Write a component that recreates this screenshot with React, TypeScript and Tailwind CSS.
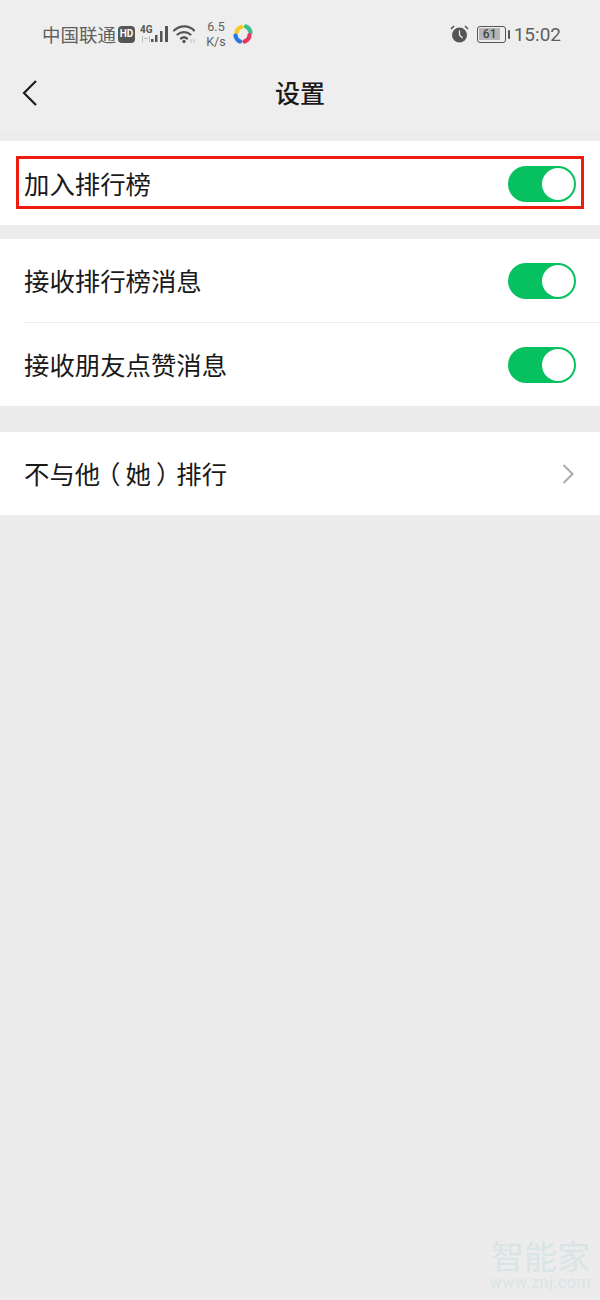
const font = { fontFamily: '"Noto Sans CJK SC", sans-serif' };

function Toggle() {
  return (
    <span className="flex h-[36px] w-[68px] shrink-0 items-center justify-end rounded-full bg-[#07c160] pr-[2px]">
      <span className="h-[32px] w-[32px] rounded-full bg-white" />
    </span>
  );
}

function StatusBar() {
  return (
    <div className="flex h-[68px] items-center justify-between pl-[42px] pr-[39px] text-[#5f5f5f]">
      <div className="flex items-center">
        <span className="text-[18.500px] leading-[24px]">中国联通</span>
        <span className="ml-[2px] flex h-[17px] w-[17px] items-center justify-center rounded-[4px] bg-[#555] font-['Roboto',sans-serif] text-[10px] font-bold leading-none text-white">HD</span>
        <svg className="ml-[5px]" width="29" height="20" viewBox="0 0 29 20" fill="#555">
          <text x="0" y="9" fontSize="10" fontWeight="700" fontFamily="Roboto, sans-serif">4G</text>
          <path d="M2 12h1v6H2zM4 14h4v1H4zM9 12h1v6H9z" fill="#bbb" />
          <rect x="11" y="15" width="2.500" height="3" />
          <rect x="15" y="11" width="2.500" height="7" />
          <rect x="20" y="7" width="2.500" height="11" />
          <rect x="25" y="2" width="3" height="16" />
        </svg>
        <svg className="ml-[4px]" width="24" height="20" viewBox="0 0 24 20" fill="none" stroke="#555" strokeWidth="2.300" strokeLinecap="round">
          <path d="M1 6.500c6-5.500 15-5.500 20 0" />
          <path d="M4.500 10.500c3.700-3.300 9.300-3.300 13 0" />
          <path d="M8 14.500c1.700-1.400 4.300-1.400 6 0" />
          <circle cx="11" cy="17.500" r="1.700" fill="#555" stroke="none" />
          <path d="M18 15.500v3M21 15.500v3" stroke="#bbb" strokeWidth="1" />
        </svg>
        <span className="ml-[8px] flex w-[22px] flex-col items-center font-['Roboto',sans-serif] text-[12.500px] leading-[15px]">
          <span>6.5</span>
          <span>K/s</span>
        </span>
        <svg className="ml-[6px]" width="20" height="20" viewBox="0 0 20 20" fill="none" strokeWidth="4.200" strokeLinecap="round">
          <path d="M3.500 9c0-2.500 1.500-5 5-6" stroke="#f6c829" />
          <path d="M13 2.500c2 .8 4 2.500 4.500 6" stroke="#3dbd8e" />
          <path d="M16.500 11c0 2.500-1.500 5-5 6.500" stroke="#e8365d" />
          <path d="M7 17.500c-2-.8-4-2.500-4.500-6" stroke="#2a77e0" />
        </svg>
      </div>
      <div className="flex items-center">
        <svg width="19" height="18" viewBox="0 0 19 18" fill="#555">
          <circle cx="9.500" cy="10" r="7.500" />
          <path d="M9.500 5.500V10l3 3" fill="none" stroke="#ededed" strokeWidth="1.300" />
          <path d="M1 4l3-3M18 4l-3-3" fill="none" stroke="#555" strokeWidth="1.600" />
        </svg>
        <span className="ml-[8px] flex h-[17px] w-[29px] items-center rounded-[3px] border-[1.500px] border-[#555] p-[1.500px]">
          <span className="flex h-full w-[21px] items-center justify-center rounded-[1px] bg-[#b5b5b5] font-['Roboto',sans-serif] text-[12px] font-medium leading-none text-[#444]">61</span>
        </span>
        <span className="ml-[2px] h-[9px] w-[2px] rounded-[1px] bg-[#555]" />
        <span className="ml-[4px] pt-[1px] font-['Roboto',sans-serif] text-[19px] leading-none">15:02</span>
      </div>
    </div>
  );
}

export default function App() {
  return (
    <div className="relative h-[1300px] w-[600px] overflow-hidden bg-[#ececec] text-[#191919]" style={font}>
      <div className="h-[130px] bg-[#eeeeee]">
        <StatusBar />
        <div className="relative flex h-[52px] items-center justify-center">
          <svg className="absolute left-[22px] top-[11px]" width="16" height="28" viewBox="0 0 16 28" fill="none" stroke="#1c1c1c" strokeWidth="2.200">
            <path d="M14 2 2 14l12 12" />
          </svg>
          <h1 className="pb-[3px] text-[25px] font-medium leading-none">设置</h1>
        </div>
      </div>

      <div className="mt-[11px] bg-white px-[16px] pb-[16px] pt-[15px]">
        <div className="flex h-[53px] items-center justify-between border-[3px] border-[#ee1c0e] pl-[5px] pr-[5px] pt-[2px]">
          <span className="text-[25.400px] leading-none">加入排行榜</span>
          <Toggle />
        </div>
      </div>

      <div className="mt-[14px] bg-white pl-[24px]">
        <div className="flex h-[84px] items-center justify-between border-b border-[#eaeaea] pr-[24px]">
          <span className="text-[25.400px] leading-none">接收排行榜消息</span>
          <Toggle />
        </div>
        <div className="flex h-[83px] items-center justify-between pr-[24px]">
          <span className="text-[25.400px] leading-none">接收朋友点赞消息</span>
          <Toggle />
        </div>
      </div>

      <div className="mt-[26px] flex h-[83px] items-center justify-between bg-white pl-[24px] pr-[26px]">
        <span className="text-[25.400px] leading-none">
          不与他<span className="pl-[0.3em] pr-[0.2em] [font-feature-settings:'halt']">（</span>她<span className="pl-[0.2em] pr-[0.3em] [font-feature-settings:'halt']">）</span>排行
        </span>
        <svg width="12" height="20" viewBox="0 0 12 20" fill="none" stroke="#ababab" strokeWidth="2">
          <path d="M1.500 1 10.500 10l-9 9" />
        </svg>
      </div>

      <div className="absolute right-[9px] top-[1236px] flex flex-col items-center text-[#d9e4e4]">
        <span className="text-[33px] leading-[38px]">智能家</span>
        <span className="font-['Roboto',sans-serif] text-[16px] leading-[18px] tracking-[0.5px]">www.znj.com</span>
      </div>
    </div>
  );
}
